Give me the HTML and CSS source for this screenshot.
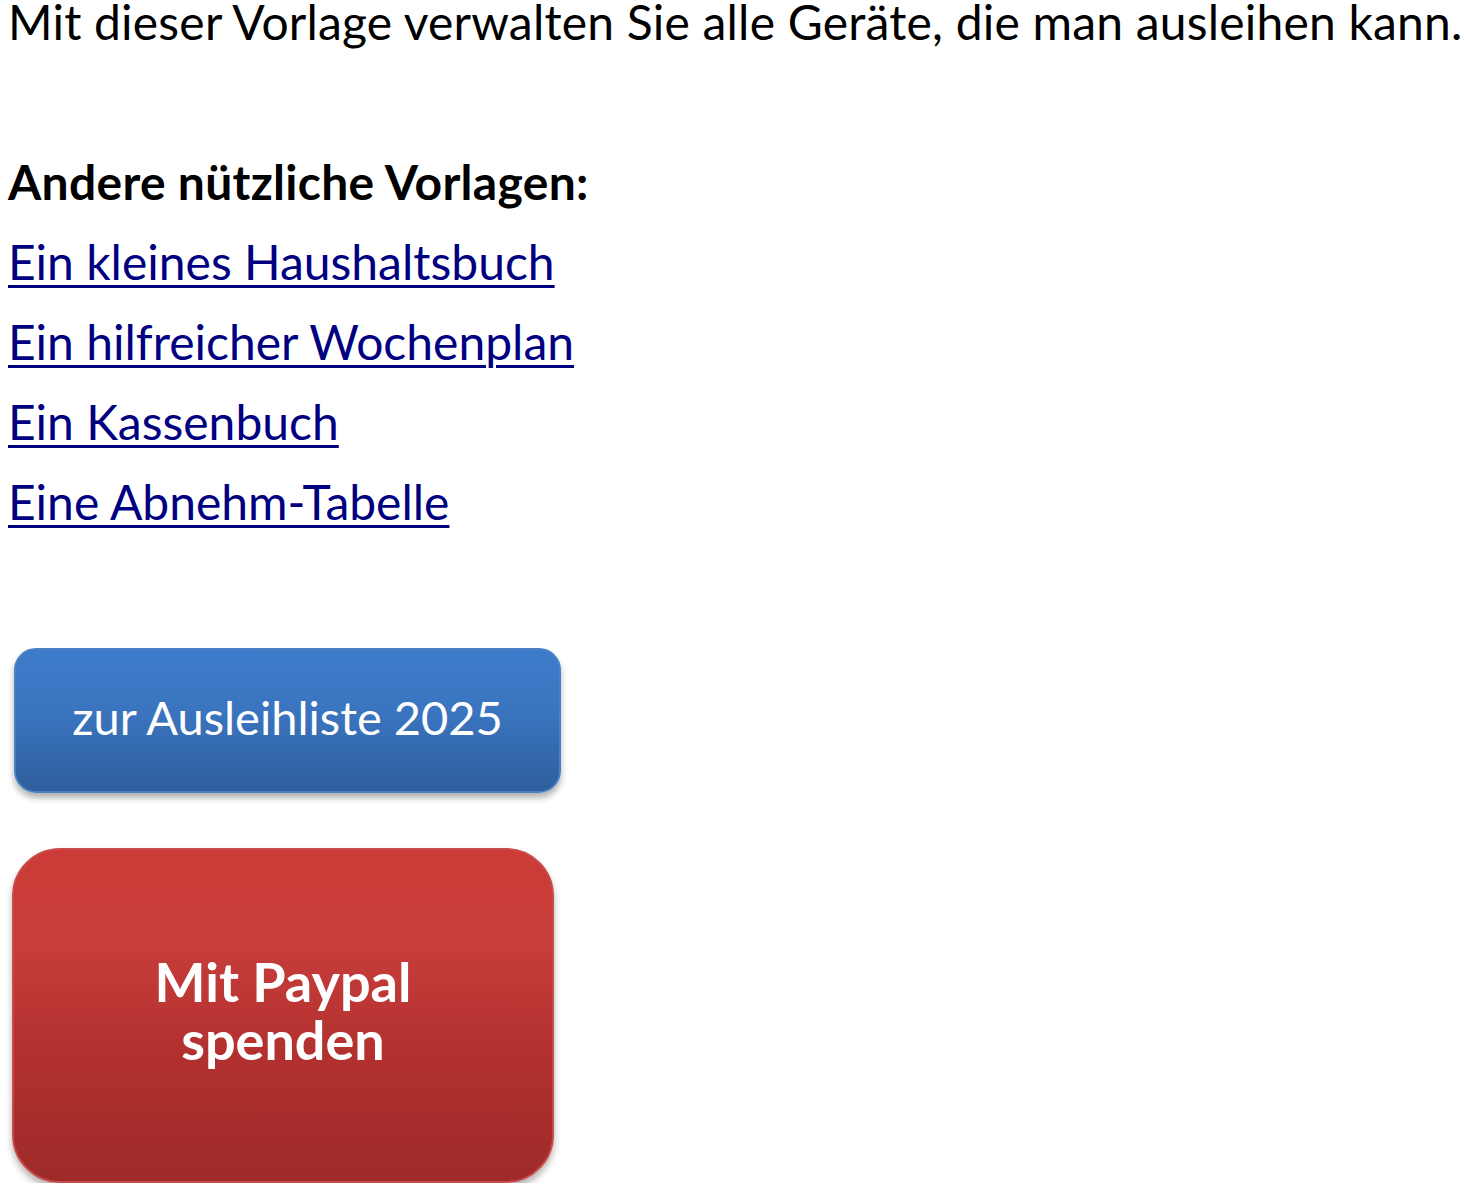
FILE: index.html
```html
<!DOCTYPE html>
<html lang="de">
<head>
<meta charset="utf-8">
<title>Ausleihliste</title>
<link rel="stylesheet" href="styles.css">
</head>
<body>
<div class="doc">
  <p class="line intro">Mit dieser Vorlage verwalten Sie alle Geräte, die man ausleihen kann.</p>
  <p class="line empty">&nbsp;</p>
  <p class="line heading">Andere nützliche Vorlagen:</p>
  <p class="line"><a href="#">Ein kleines Haushaltsbuch</a></p>
  <p class="line"><a href="#">Ein hilfreicher Wochenplan</a></p>
  <p class="line"><a href="#">Ein Kassenbuch</a></p>
  <p class="line"><a href="#">Eine Abnehm-Tabelle</a></p>
</div>
<div class="buttons">
  <a class="btn btn-blue" href="#">zur Ausleihliste 2025</a>
  <a class="btn btn-red" href="#">Mit Paypal<br>spenden</a>
</div>
</body>
</html>
```
FILE: styles.css
```css
html, body {
  margin: 0;
  padding: 0;
  background: #ffffff;
}
body {
  font-family: Lato, "Liberation Sans", sans-serif;
  color: #000000;
  padding: 0 8px;
}
.line {
  margin: 0;
  font-size: 48px;
  line-height: 43px;
  height: 80px;
  white-space: nowrap;
}
.intro {
  letter-spacing: 0.2px;
}
.heading {
  font-weight: 700;
  letter-spacing: 0.3px;
}
.line a {
  color: #000080;
  text-decoration: underline;
  text-decoration-thickness: 3px;
  text-underline-offset: 5px;
}
.buttons {
  display: flex;
  flex-direction: column;
  align-items: flex-start;
  margin-top: 88px;
}
.btn {
  display: flex;
  align-items: center;
  justify-content: center;
  text-align: center;
  color: #ffffff;
  text-decoration: none;
  box-sizing: border-box;
}
.btn-blue {
  margin-left: 6px;
  width: 547px;
  height: 145px;
  border-radius: 22px;
  border: 2px solid #4a80c6;
  background: linear-gradient(#3d7cca 0%, #3a74bf 45%, #2f5f9c 100%);
  box-shadow: 0 5px 6px rgba(0, 0, 0, 0.3);
  font-size: 47px;
  padding-bottom: 8px;
}
.btn-red {
  margin-top: 55px;
  margin-left: 4px;
  width: 542px;
  height: 335px;
  border-radius: 48px;
  border: 2px solid #c84a4a;
  background: linear-gradient(#cc3b37 0%, #c63d3a 30%, #b3312f 60%, #9d2b2a 100%);
  box-shadow: 0 5px 7px rgba(0, 0, 0, 0.3);
  font-size: 54px;
  font-weight: 700;
  line-height: 58px;
  padding-bottom: 10px;
}
```
